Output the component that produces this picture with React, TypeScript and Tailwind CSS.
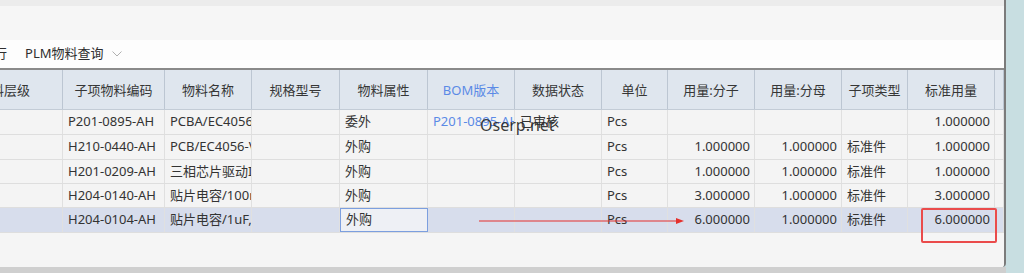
import React from 'react';

// column layout of the BOM grid (px widths measured from the window)
const COLS = [
  { title: '物料层级', w: 'w-[63px]', align: 'left' },
  { title: '子项物料编码', w: 'w-[102px]', align: 'left' },
  { title: '物料名称', w: 'w-[87px]', align: 'left' },
  { title: '规格型号', w: 'w-[88px]', align: 'left' },
  { title: '物料属性', w: 'w-[88px]', align: 'left' },
  { title: 'BOM版本', w: 'w-[87px]', align: 'left', link: true },
  { title: '数据状态', w: 'w-[87px]', align: 'left' },
  { title: '单位', w: 'w-[66px]', align: 'left' },
  { title: '用量:分子', w: 'w-[87px]', align: 'right' },
  { title: '用量:分母', w: 'w-[87px]', align: 'right' },
  { title: '子项类型', w: 'w-[66px]', align: 'left' },
  { title: '标准用量', w: 'w-[87px]', align: 'right' },
];

const ROWS = [
  { h: 'h-[25px]', cells: ['', 'P201-0895-AH', 'PCBA/EC4056-V1', '', '委外', 'P201-0895-AH', '已审核', 'Pcs', '', '', '', '1.000000'] },
  { h: 'h-[25px]', cells: ['', 'H210-0440-AH', 'PCB/EC4056-V1', '', '外购', '', '', 'Pcs', '1.000000', '1.000000', '标准件', '1.000000'] },
  { h: 'h-[24px]', cells: ['', 'H201-0209-AH', '三相芯片驱动IC', '', '外购', '', '', 'Pcs', '1.000000', '1.000000', '标准件', '1.000000'] },
  { h: 'h-[24px]', cells: ['', 'H204-0140-AH', '贴片电容/100nF', '', '外购', '', '', 'Pcs', '3.000000', '1.000000', '标准件', '3.000000'] },
  { h: 'h-[25px]', cells: ['', 'H204-0104-AH', '贴片电容/1uF,10V', '', '外购', '', '', 'Pcs', '6.000000', '1.000000', '标准件', '6.000000'], selected: true },
];

function HeaderRow() {
  return (
    <div className="flex h-[40px] bg-[#dfe6ee] border-b border-[#c3ccd6]">
      {COLS.map((c, i) => (
        <div
          key={i}
          className={`${c.w} shrink-0 border-r border-[#bcc6d2] flex items-center pt-[2px] overflow-hidden whitespace-nowrap ${
            i === 0 ? 'justify-start' : 'justify-center'
          } ${c.link ? 'text-[#5b8ae6]' : 'text-[#363636]'}`}
        >
          {i === 0 ? <span className="-ml-[22px]">{c.title}</span> : c.title}
        </div>
      ))}
      <div className="flex-1 border-r border-[#bcc6d2]" />
    </div>
  );
}

function DataRow({ row }: { row: (typeof ROWS)[number] }) {
  return (
    <div className={`flex ${row.h} border-b border-[#dedede] ${row.selected ? 'bg-[#d7ddec]' : 'bg-[#f4f4f4]'}`}>
      {COLS.map((c, i) => {
        const focused = row.selected && i === 4;
        const blue = c.link && row.cells[i];
        return (
          <div
            key={i}
            className={`${c.w} shrink-0 flex items-center overflow-hidden whitespace-nowrap ${
              c.align === 'right' ? 'justify-end pr-[4px]' : 'justify-start pl-[5px]'
            } ${focused ? 'border border-[#7c9fdf] bg-[#eef0f5] pl-[3px]' : 'border-r border-[#e0e0e0]'} ${
              blue ? 'text-[#5b8ae6]' : 'text-[#333333]'
            }`}
          >
            {row.cells[i]}
          </div>
        );
      })}
      <div className="flex-1 border-r border-[#e0e0e0]" />
    </div>
  );
}

export default function App() {
  return (
    <div
      className="relative w-[1024px] h-[273px] flex overflow-hidden bg-[#c8dee1] text-[13px]"
      style={{ fontFamily: '"Noto Sans", "Noto Sans CJK SC", sans-serif' }}
    >
      <div className="w-[1006px] flex flex-col">
        <div className="h-[267px] flex flex-col bg-[#f5f5f5] border-r-2 border-[#7b7b7b] rounded-br-[4px] overflow-hidden">
          <div className="h-[6px] bg-[#ececec]" />
          <div className="h-[34px] bg-[#f6f6f6]" />
          <div className="h-[28px] bg-[#fdfdfd] flex items-center text-[#2e2e2e]">
            <span className="-ml-[6px]">行</span>
            <span className="ml-[18px]">PLM物料查询</span>
            <svg className="ml-[9px]" width="10" height="6" viewBox="0 0 10 6" fill="none">
              <path d="M0.5 0.5 L5 5 L9.5 0.5" stroke="#b0b0b0" strokeWidth="1" />
            </svg>
          </div>
          <div className="h-[2px] bg-[#8a8a8a]" />
          <HeaderRow />
          {ROWS.map((r, i) => (
            <DataRow key={i} row={r} />
          ))}
          <div className="flex-1 bg-[#f5f5f5]" />
        </div>
        <div className="flex-1 bg-[#cfcfcf]" />
      </div>
      <div className="flex-1" />

      {/* watermark over the first row */}
      <div className="absolute left-[480px] top-[113px] text-[16px] text-[#222222]/90 pointer-events-none">
        Oserp.net
      </div>

      {/* red annotation arrow */}
      <svg className="absolute left-[476px] top-[215px]" width="212" height="12" viewBox="0 0 212 12">
        <line x1="3" y1="6" x2="204" y2="6" stroke="#e5302c" strokeWidth="1.2" />
        <path d="M200 3 L208 6 L200 9 Z" fill="#e5302c" />
      </svg>

      {/* red highlight box */}
      <div className="absolute left-[921px] top-[208px] w-[76px] h-[35px] border-2 border-[#ea4b4b] rounded-[2px]" />
    </div>
  );
}
